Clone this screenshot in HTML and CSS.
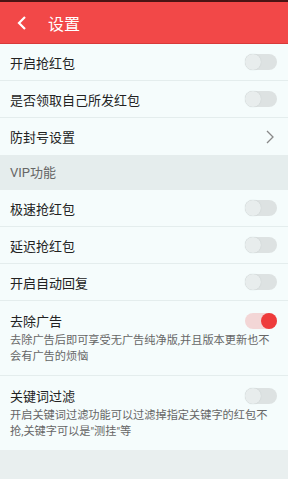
FILE: index.html
```html
<!DOCTYPE html>
<html lang="zh">
	<head>
		<meta charset="UTF-8">
		<title>设置</title>
		<link rel="stylesheet" href="styles.css">
	</head>
	<body>
		<header class="title-bar">
			<span class="back">
				<svg width="10" height="14" viewBox="0 0 10 14"><path d="M8 1 L2 7 L8 13" fill="none" stroke="#fff" stroke-width="2.2"/></svg>
			</span>
			<span class="title">设置</span>
		</header>
		<div class="group">
			<div class="row">
				<span class="label">开启抢红包</span>
				<span class="switch"></span>
			</div>
			<div class="row">
				<span class="label">是否领取自己所发红包</span>
				<span class="switch"></span>
			</div>
			<div class="row">
				<span class="label">防封号设置</span>
				<svg class="arrow" width="8" height="14" viewBox="0 0 8 14"><path d="M1 1 L7 7 L1 13" fill="none" stroke="#888" stroke-width="1.3"/></svg>
			</div>
		</div>
		<div class="section-title">VIP功能</div>
		<div class="group">
			<div class="row">
				<span class="label">极速抢红包</span>
				<span class="switch"></span>
			</div>
			<div class="row">
				<span class="label">延迟抢红包</span>
				<span class="switch"></span>
			</div>
			<div class="row">
				<span class="label">开启自动回复</span>
				<span class="switch"></span>
			</div>
			<div class="row row-tall">
				<div class="row-head">
					<span class="label">去除广告</span>
					<span class="switch on"></span>
				</div>
				<div class="desc">去除广告后即可享受无广告纯净版,并且版本更新也不会有广告的烦恼</div>
			</div>
			<div class="row row-tall">
				<div class="row-head">
					<span class="label">关键词过滤</span>
					<span class="switch"></span>
				</div>
				<div class="desc">开启关键词过滤功能可以过滤掉指定关键字的红包不抢,关键字可以是"测挂"等</div>
			</div>
		</div>
	</body>
</html>
```

FILE: styles.css
```css
*, *::before, *::after {
	box-sizing: border-box;
}

html, body {
	margin: 0;
	padding: 0;
	height: 100%;
}

body {
	background: #e9efef;
	color: #222;
	font-family: Roboto, "Noto Sans CJK SC", sans-serif;
	font-size: 13px;
}

.title-bar {
	display: flex;
	align-items: center;
	height: 44px;
	background: #f24848;
	border-top: 2px solid #4a1414;
	border-bottom: 1px solid #d83a3a;
	color: #fff;
}

.back {
	display: flex;
	width: 48px;
	padding-left: 17px;
}

.title {
	font-size: 16px;
}

.group {
	background: #f5fcfc;
}

.row {
	display: flex;
	align-items: center;
	justify-content: space-between;
	height: 37px;
	padding: 0 11px 0 10px;
	border-bottom: 1px solid #e4eded;
}

.row:last-child {
	border-bottom: 0;
}

.row-tall {
	display: block;
	height: auto;
	padding-top: 10px;
	padding-bottom: 10px;
}

.row-head {
	display: flex;
	align-items: center;
	justify-content: space-between;
}

.desc {
	margin-top: 3px;
	padding-right: 6px;
	font-size: 11.2px;
	line-height: 16px;
	color: #666;
}

.arrow {
	margin-right: 3px;
}

.section-title {
	height: 35px;
	line-height: 35px;
	padding-left: 10px;
	color: #666;
	background: #e5eded;
}

.switch {
	position: relative;
	display: block;
	width: 32px;
	height: 16px;
	border-radius: 8px;
	background: #dde2e2;
}

.switch::after {
	content: "";
	position: absolute;
	left: 0;
	top: 0;
	width: 16px;
	height: 16px;
	border-radius: 50%;
	background: #e8eded;
	box-shadow: 0 0 1px #b8c0c0;
}

.switch.on {
	background: #f3d6d6;
}

.switch.on::after {
	left: auto;
	right: 0;
	background: #ee3b3b;
	box-shadow: none;
}
```
